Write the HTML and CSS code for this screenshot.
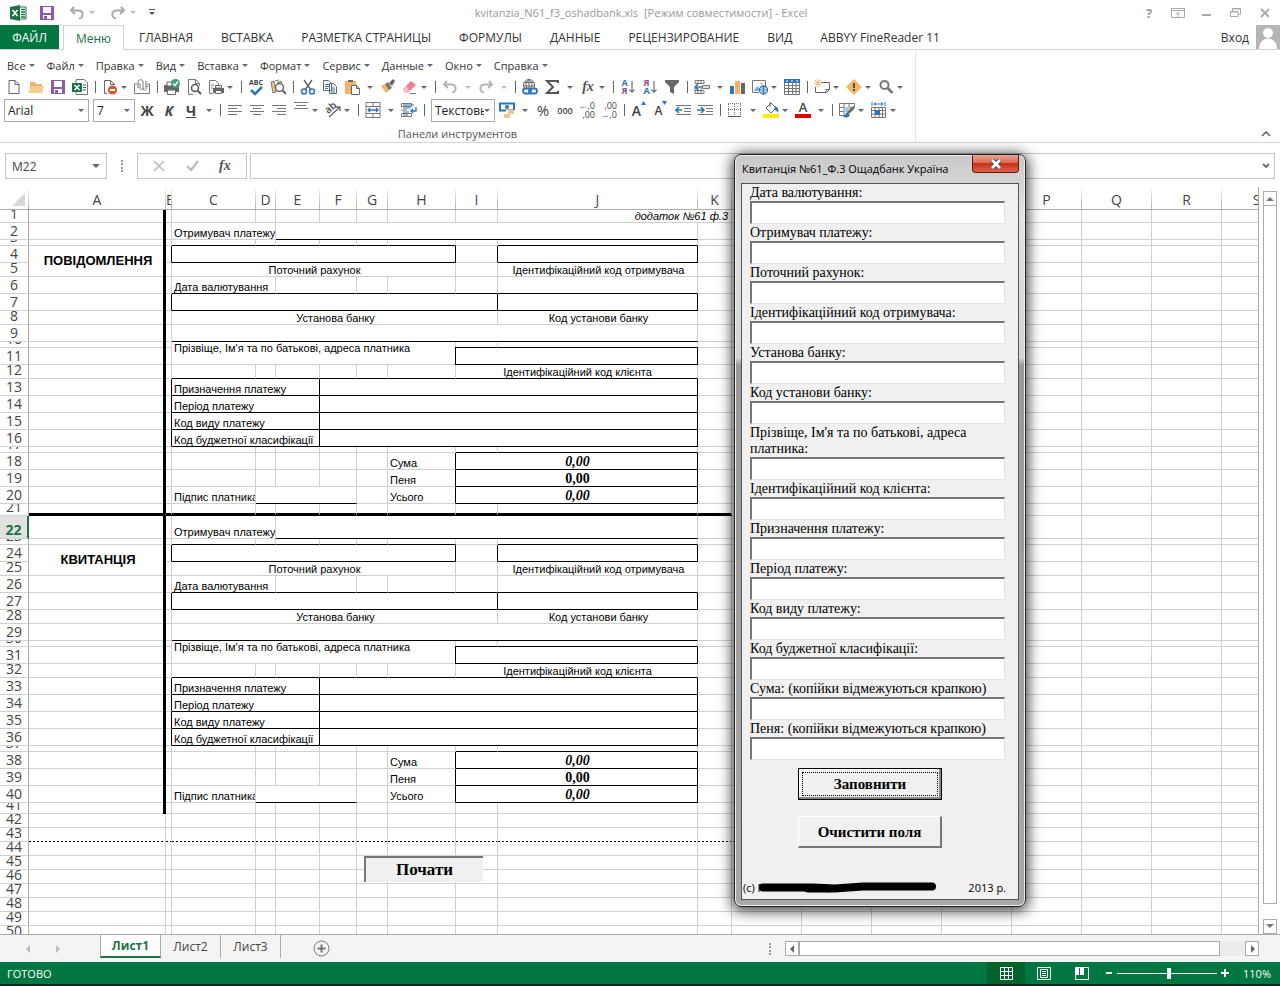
FILE: index.html
```html
<!DOCTYPE html>
<html lang="ru">
<head>
<meta charset="utf-8">
<title>kvitanzia_N61_f3_oshadbank.xls - Excel</title>
<link rel="stylesheet" href="styles.css">
</head>
<body>
<div class="app">
  <header class="titlebar">
    <div class="quick">
      <svg width="17" height="16" viewBox="0 0 17 16"><path d="M9 2h7v12H9" fill="#fff" stroke="#1e7145"/><path d="M11 4.500h4M11 7h4M11 9.500h4M11 12h4" stroke="#1e7145" stroke-width="1.300"/><path d="M0 2l10-2v16L0 14z" fill="#1e7145"/><path d="M2.500 5l5 6M7.500 5l-5 6" stroke="#fff" stroke-width="1.500"/></svg>
      <button class="qb" aria-label="Сохранить"><svg width="14" height="14" viewBox="0 0 14 14"><path d="M0 0h14v14H0z" fill="#8c5aa8"/><path d="M3 1h8v6H3zM3 9h8v4H3z" fill="#fff"/><path d="M4 10h3v4H4z" fill="#8c5aa8"/></svg></button>
      <button class="qb wide" aria-label="Отменить"><svg width="16" height="14" viewBox="0 0 16 14"><path d="M5 1L2 4.500 6 8M2 4.500h7c6 0 6 7 1 8" fill="none" stroke="#aaa" stroke-width="2"/></svg><i class="dd pale"></i></button>
      <button class="qb wide" aria-label="Вернуть"><svg width="16" height="14" viewBox="0 0 16 14"><path d="M11 1l3 3.500L10 8M14 4.500H7c-6 0-6 7-1 8" fill="none" stroke="#aaa" stroke-width="2"/></svg><i class="dd pale"></i></button>
      <button class="qb" aria-label="Настройка панели"><svg width="7" height="8" viewBox="0 0 7 8"><path d="M0 .5h6" stroke="#555"/><path d="M0 3h6L3 6z" fill="#555"/></svg></button>
    </div>
    <h1 class="doc">kvitanzia_N61_f3_oshadbank.xls&nbsp; [Режим совместимости] - Excel</h1>
    <div class="winbtns">
      <button aria-label="Справка" class="help">?</button>
      <button aria-label="Лента"><svg width="14" height="12" viewBox="0 0 14 12"><path d="M.5 1.500h13v9H.5zM.5 3.500h13M7 10V5.500M5 7.500l2-2 2 2" fill="none" stroke="#aaa"/></svg></button>
      <button aria-label="Свернуть"><svg width="14" height="12" viewBox="0 0 14 12"><path d="M2 8h9" stroke="#aaa" stroke-width="2"/></svg></button>
      <button aria-label="Восстановить"><svg width="14" height="12" viewBox="0 0 14 12"><path d="M3.500 4V1.500h8v6H9M1.500 4.500H9v5H1.500zM3 2h9M1 5h8" fill="none" stroke="#aaa"/></svg></button>
      <button aria-label="Закрыть"><svg width="14" height="12" viewBox="0 0 14 12"><path d="M3 2l8 8M11 2l-8 8" stroke="#aaa" stroke-width="1.800"/></svg></button>
    </div>
  </header>

  <nav class="tabs">
    <button class="tab file">ФАЙЛ</button>
    <button class="tab current">Меню</button>
    <button class="tab">ГЛАВНАЯ</button>
    <button class="tab">ВСТАВКА</button>
    <button class="tab">РАЗМЕТКА СТРАНИЦЫ</button>
    <button class="tab">ФОРМУЛЫ</button>
    <button class="tab">ДАННЫЕ</button>
    <button class="tab">РЕЦЕНЗИРОВАНИЕ</button>
    <button class="tab">ВИД</button>
    <button class="tab">ABBYY FineReader 11</button>
    <div class="login"><a href="#">Вход</a><svg width="24" height="24" viewBox="0 0 24 24"><path d="M0 0h24v24H0z" fill="#b5b5b5"/><circle cx="12" cy="8" r="5" fill="#fff"/><path d="M3 24c0-14 18-14 18 0z" fill="#fff"/></svg></div>
  </nav>

  <section class="ribbon">
    <div class="group">
      <div class="menus">
        <button>Все<i class="dd"></i></button><button>Файл<i class="dd"></i></button><button>Правка<i class="dd"></i></button><button>Вид<i class="dd"></i></button><button>Вставка<i class="dd"></i></button><button>Формат<i class="dd"></i></button><button>Сервис<i class="dd"></i></button><button>Данные<i class="dd"></i></button><button>Окно<i class="dd"></i></button><button>Справка<i class="dd"></i></button>
      </div>
      <div class="tools">
        <button class="t" aria-label="Создать"><svg viewBox="0 0 16 16"><path d="M3 1.500h6l4 4v9H3zM9 1.500v4h4" fill="#fff" stroke="#666"/></svg></button>
        <button class="t" aria-label="Открыть"><svg viewBox="0 0 16 16"><path d="M2 14V3h5l1 2h6v9z" fill="#f0b468"/><path d="M0 14l3-7h13l-2 7z" fill="#f8cd93"/></svg></button>
        <button class="t" aria-label="Сохранить"><svg viewBox="0 0 16 16"><path d="M1 1h14v14H1z" fill="#8c5aa8"/><path d="M4 2h8v6H4zM4 10h8v4H4z" fill="#fff"/><path d="M5 11h3v4H5z" fill="#8c5aa8"/></svg></button>
        <button class="t" aria-label="Сохранить в Excel"><svg viewBox="0 0 16 16"><path d="M4 .5h8l3.500 3v12H4z" fill="#fff" stroke="#777"/><path d="M0 4h10v9H0z" fill="#1e7145"/><path d="M2.500 6l5 5M7.500 6l-5 5" stroke="#fff" stroke-width="1.500"/><path d="M11 6h3M11 8.500h3M11 11h3" stroke="#1e7145"/></svg></button>
        <span class="sep"></span>
        <button class="t" aria-label="Удалить"><svg viewBox="0 0 16 16"><path d="M5 14.500H2.500v-13h6l4 4V6M8.500 1.500v4h4" fill="none" stroke="#666"/><circle cx="10.500" cy="11" r="4.500" fill="#d9532c"/><path d="M8 11h5" stroke="#fff" stroke-width="2"/></svg></button><i class="dd gap"></i>
        <button class="t" aria-label="Вложение"><svg viewBox="0 0 16 16"><path d="M3 5H.5v9.500h15V5H13M12 7.500h2M4 9V3c0-3 5-3 5 0v6c0 2-3 2-3 0V4M9 9c0 3 3 3 3 0V2" fill="none" stroke="#777"/></svg></button>
        <span class="sep"></span>
        <button class="t" aria-label="Печать"><svg viewBox="0 0 16 16"><path d="M0 6h15v7H0z" fill="#666"/><path d="M3 3h8v4H3zM3.500 11h8v4.500h-8z" fill="#fff" stroke="#666"/><circle cx="11.500" cy="4.500" r="4.500" fill="#3f9d77"/><path d="M9 4.500l2 2 3-4" stroke="#fff" stroke-width="1.400" fill="none"/></svg></button>
        <button class="t" aria-label="Просмотр"><svg viewBox="0 0 16 16"><path d="M7 15.500H2.500V.5h7l4 4V7M9.500.5v4h4" fill="none" stroke="#777"/><circle cx="9" cy="9" r="3.500" fill="#fff" stroke="#555" stroke-width="1.500"/><path d="M12 12l3 3" stroke="#555" stroke-width="2"/></svg></button>
        <button class="t" aria-label="Параметры печати"><svg viewBox="0 0 16 16"><path d="M5 14.500H1.500v-13h6l3 3V6M3 6h3M3 9h2" fill="none" stroke="#777"/><path d="M5 9h11v5H5z" fill="#666"/><path d="M7.500 6.500h6V9h-6zM7.500 11.500h6v3h-6z" fill="#fff" stroke="#666"/></svg></button><i class="dd gap"></i>
        <span class="sep"></span>
        <button class="t spell" aria-label="Орфография"><span>ABC</span><svg viewBox="0 0 16 10"><path d="M3 4l4 4 7-7" fill="none" stroke="#2e75b6" stroke-width="2.500"/></svg></button>
        <button class="t" aria-label="Справочники"><svg viewBox="0 0 16 16"><path d="M1 3l3-1 2 11-3 1zM5 2l4-1M7 4l4-2 1 2" fill="#f5c78b" stroke="#777"/><circle cx="9.500" cy="8.500" r="4" fill="#fff" stroke="#666" stroke-width="1.500"/><path d="M12 11l4 4" stroke="#666" stroke-width="2"/></svg></button>
        <span class="sep"></span>
        <button class="t" aria-label="Вырезать"><svg viewBox="0 0 16 16"><path d="M4 1l7 10M12 1L5 11" stroke="#666" stroke-width="1.500"/><circle cx="4" cy="12.500" r="2.500" fill="none" stroke="#2e75b6" stroke-width="1.500"/><circle cx="12" cy="12.500" r="2.500" fill="none" stroke="#2e75b6" stroke-width="1.500"/></svg></button>
        <button class="t" aria-label="Копировать"><svg viewBox="0 0 16 16"><path d="M1.500 1.500h5l3 3v7h-8zM7.500 4.500h4l3 3v7h-7z" fill="#fff" stroke="#666"/><path d="M3 5.500h4M3 7.500h4M3 9.500h3M9 9h4M9 11h4M9 13h4" stroke="#2e75b6"/></svg></button>
        <button class="t" aria-label="Вставить"><svg viewBox="0 0 16 16"><path d="M1 2h11v13H1z" fill="#f0b468"/><path d="M4 3V1h5v2z" fill="#666"/><path d="M7.500 6.500h5l3 3v6h-8zM12.500 6.500v3h3" fill="#fff" stroke="#666"/></svg></button><i class="dd gap w"></i>
        <button class="t" aria-label="Формат по образцу"><svg viewBox="0 0 16 16"><path d="M1 7l5 7 4-3-5-6z" fill="#f0b468"/><path d="M5 5l3-2 4 6-3 2z" fill="#777"/><path d="M9 4l4-4 2 2-3 5z" fill="#666"/></svg></button>
        <button class="t" aria-label="Очистить"><svg viewBox="0 0 16 16"><path d="M1 10l8-8 5 4-8 8H3z" fill="#ef7f93"/><path d="M1 10l3-3 4 5-2 2H3z" fill="#f8c0c8"/><path d="M8 14.500h6" stroke="#777"/></svg></button><i class="dd gap"></i>
        <span class="sep"></span>
        <button class="t" aria-label="Отменить"><svg viewBox="0 0 16 16"><path d="M5 2L2 5.500 6 9M2 5.500h7c6 0 6 7 1 8" fill="none" stroke="#b5b5b5" stroke-width="2"/></svg></button><i class="dd gap w pale"></i>
        <button class="t" aria-label="Вернуть"><svg viewBox="0 0 16 16"><path d="M11 2l3 3.500L10 9M14 5.500H7c-6 0-6 7-1 8" fill="none" stroke="#b5b5b5" stroke-width="2"/></svg></button><i class="dd gap w pale"></i>
        <span class="sep"></span>
        <button class="t" aria-label="Гиперссылка"><svg viewBox="0 0 16 16"><circle cx="7" cy="6" r="5.500" fill="none" stroke="#666"/><path d="M7 0v9M2 3.500h10M1.500 7h11M7 .5c-4 3-4 8 0 10M7 .5c4 3 4 8 0 10" fill="none" stroke="#666"/><rect x="1" y="9.500" width="8" height="5" rx="2.500" fill="#fff" stroke="#2e75b6" stroke-width="1.800"/><rect x="7" y="9.500" width="8" height="5" rx="2.500" fill="none" stroke="#2e75b6" stroke-width="1.800"/></svg></button>
        <button class="t" aria-label="Сумма"><svg viewBox="0 0 16 16"><path d="M14 4V2H3l6 6-6 6h11v-2" fill="none" stroke="#555" stroke-width="2"/></svg></button><i class="dd gap w"></i>
        <button class="t fx" aria-label="Функция">fx</button><i class="dd gap"></i>
        <span class="sep"></span>
        <button class="t sort" aria-label="Сортировка по возрастанию"><span><b class="blue">А</b><b class="violet">Я</b></span><svg viewBox="0 0 7 16"><path d="M3.500 1v13M.5 11l3 3 3-3" fill="none" stroke="#666" stroke-width="1.300"/></svg></button>
        <button class="t sort" aria-label="Сортировка по убыванию"><span><b class="violet">Я</b><b class="blue">А</b></span><svg viewBox="0 0 7 16"><path d="M3.500 1v13M.5 11l3 3 3-3" fill="none" stroke="#666" stroke-width="1.300"/></svg></button>
        <button class="t" aria-label="Фильтр"><svg viewBox="0 0 16 16"><path d="M1 1h14v2L10 8v7l-4-2V8L1 3z" fill="#666"/></svg></button>
        <span class="sep"></span>
        <button class="t" aria-label="Вставить ячейки"><svg viewBox="0 0 16 16"><path d="M1 1.500h9v3H1zM4 1v4M7 1v4M1 11.500h9v3H1zM4 9v6M7 9v6M1 9v3" fill="none" stroke="#777"/><path d="M8.500 6.500h7v3h-7z" fill="#ddd" stroke="#777"/><path d="M8 8H1M4 5L1 8l3 3" fill="none" stroke="#2e75b6" stroke-width="1.500"/></svg></button><i class="dd gap w"></i>
        <button class="t" aria-label="Диаграмма"><svg viewBox="0 0 16 16"><path d="M0 7h4v8H0z" fill="#2e75b6"/><path d="M5 2h5v13H5z" fill="#f0b468"/><path d="M11 4h4v11h-4z" fill="#666"/></svg></button>
        <button class="t" aria-label="Рисунок"><svg viewBox="0 0 16 16"><path d="M7 13.500H.5v-12h13V7" fill="none" stroke="#777"/><path d="M2 11l3-4 3 3v2H2z" fill="#7eb2dc"/><circle cx="9.500" cy="4.500" r="1.300" fill="#f0b468"/><circle cx="11.500" cy="11" r="4" fill="#fff" stroke="#2e75b6" stroke-width="1.300"/><path d="M8 11h7M11.500 7v8M9.500 9h4M9.500 13h4" stroke="#2e75b6"/></svg></button><i class="dd gap"></i>
        <button class="t" aria-label="Таблица"><svg viewBox="0 0 16 16"><path d="M.5.5h15v15H.5zM.5 6.500h15M.5 9.500h15M.5 12.500h15M4.500 4v12M8.500 4v12M12 4v12" fill="none" stroke="#777"/><path d="M0 0h16v4H0z" fill="#2e75b6"/><path d="M2 2h2M7 2h2M12 2h2" stroke="#fff"/></svg></button>
        <span class="sep"></span>
        <button class="t" aria-label="Примечание"><svg viewBox="0 0 16 16"><path d="M7 3.500h8.500v7l-3 3h-11V8M15 10.500h-3v3" fill="none" stroke="#666"/><path d="M4 0v8M0 4h8M1 1l6 6M7 1L1 7" stroke="#f0b468"/></svg></button><i class="dd gap"></i>
        <button class="t" aria-label="Ошибки"><svg viewBox="0 0 16 16"><path d="M8 0l8 8-8 8-8-8z" fill="#f3b768"/><path d="M8 4v5M8 10v2" stroke="#444" stroke-width="1.800"/></svg></button><i class="dd gap"></i>
        <button class="t" aria-label="Найти"><svg viewBox="0 0 16 16"><circle cx="6.500" cy="6" r="4" fill="none" stroke="#777" stroke-width="2"/><path d="M9.500 9l5 5" stroke="#777" stroke-width="2.600"/></svg></button><i class="dd gap"></i>
      </div>
      <div class="tools second">
        <label class="combo font"><select aria-label="Шрифт"><option>Arial</option></select><i class="dd"></i></label>
        <label class="combo size"><select aria-label="Размер"><option>7</option></select><i class="dd"></i></label>
        <button class="t fmt" aria-label="Полужирный"><b>Ж</b></button>
        <button class="t fmt" aria-label="Курсив"><b><em>К</em></b></button>
        <button class="t fmt" aria-label="Подчеркнутый"><b><u>Ч</u></b></button><i class="dd gap w"></i>
        <span class="sep"></span>
        <button class="t" aria-label="По левому краю"><svg viewBox="0 0 16 16"><path d="M1 3.500h14M1 6.500h9M1 9.500h14M1 12.500h9" stroke="#777"/></svg></button>
        <button class="t" aria-label="По центру"><svg viewBox="0 0 16 16"><path d="M1 3.500h14M4 6.500h8M1 9.500h14M4 12.500h8" stroke="#777"/></svg></button>
        <button class="t" aria-label="По правому краю"><svg viewBox="0 0 16 16"><path d="M1 3.500h14M6 6.500h9M1 9.500h14M6 12.500h9" stroke="#777"/></svg></button>
        <button class="t" aria-label="По верхнему краю"><svg viewBox="0 0 16 16"><path d="M1 .5h14M3 3.500h10M1 6.500h14" stroke="#777"/></svg></button><i class="dd gap"></i>
        <button class="t orient" aria-label="Ориентация"><span>ab</span><svg viewBox="0 0 16 16"><path d="M4 15L15 5M11 5h4v4" fill="none" stroke="#666" stroke-width="1.300"/></svg></button><i class="dd gap"></i>
        <span class="sep"></span>
        <button class="t" aria-label="Объединить"><svg viewBox="0 0 16 16"><path d="M1 .5h14v15H1zM1 4.500h14M1 11.500h14M8 0v4M8 12v4" fill="none" stroke="#777"/><path d="M3 8h10M5 6L3 8l2 2M11 6l2 2-2 2" fill="none" stroke="#2e75b6" stroke-width="1.300"/></svg></button><i class="dd gap w"></i>
        <button class="t" aria-label="Перенос текста"><svg viewBox="0 0 16 16"><path d="M.5 1.500h10v3H.5zM.5 11.500h10v3H.5zM0 8h6" fill="none" stroke="#777"/><path d="M2 3h11M2 6h8M2 10h6M2 13h5" stroke="#2e75b6"/><path d="M15 5v4h-5M12 7l-2 2 2 2" fill="none" stroke="#2e75b6" stroke-width="1.300"/></svg></button>
        <span class="sep"></span>
        <label class="combo kind"><select aria-label="Числовой формат"><option>Текстовый</option></select><i class="dd"></i></label>
        <button class="t" aria-label="Денежный формат"><svg viewBox="0 0 16 16"><path d="M1 1.500h14v7H1z" fill="#fff" stroke="#2e75b6" stroke-width="2"/><circle cx="8" cy="5" r="2" fill="#2e75b6"/><path d="M7 8h9v8H4V12h3z" fill="#fff"/><path d="M9 9h6M9 11h6M5 13h6M5 15h6" stroke="#f0b468" stroke-width="1.500"/></svg></button><i class="dd gap w"></i>
        <button class="t pct" aria-label="Процентный формат">%</button>
        <button class="t zeros" aria-label="Формат с разделителями">000</button>
        <button class="t digits" aria-label="Увеличить разрядность"><span><i class="arr">←</i>,0</span><span>,00</span></button>
        <button class="t digits" aria-label="Уменьшить разрядность"><span>,00</span><span><i class="arr">→</i>,0</span></button>
        <span class="sep"></span>
        <button class="t letter" aria-label="Увеличить шрифт">A<svg viewBox="0 0 5 4"><path d="M0 4l2.500-4L5 4z" fill="#2e75b6"/></svg></button>
        <button class="t letter small" aria-label="Уменьшить шрифт">A<svg viewBox="0 0 5 4"><path d="M0 0h5L2.500 4z" fill="#2e75b6"/></svg></button>
        <button class="t" aria-label="Уменьшить отступ"><svg viewBox="0 0 16 16"><path d="M1 3.500h15M9 6.500h7M9 9.500h7M1 12.500h15" stroke="#777"/><path d="M7 8H1M4 5L1 8l3 3" fill="none" stroke="#2e75b6" stroke-width="1.600"/></svg></button>
        <button class="t" aria-label="Увеличить отступ"><svg viewBox="0 0 16 16"><path d="M1 3.500h15M9 6.500h7M9 9.500h7M1 12.500h15" stroke="#777"/><path d="M0 8h7M4 5l3 3-3 3" fill="none" stroke="#2e75b6" stroke-width="1.600"/></svg></button>
        <span class="sep"></span>
        <button class="t" aria-label="Границы"><svg viewBox="0 0 16 16"><path d="M1.500 2v12M7.500 2v12M13.500 2v12M1 1.500h13M1 7.500h13" stroke="#777" stroke-dasharray="1 1"/><path d="M1 14.500h13" stroke="#555"/></svg></button><i class="dd gap w"></i>
        <button class="t" aria-label="Цвет заливки"><svg viewBox="0 0 16 16"><path d="M3 6l5-5 5 5-5 5z" fill="#fff" stroke="#666"/><path d="M7 0v5" stroke="#666"/><path d="M12 4c3 1 4 4 3 7-1-2-2-3-4-3z" fill="#2e75b6"/><path d="M0 12h16v4H0z" fill="#ffee00"/></svg></button><i class="dd gap"></i>
        <button class="t color" aria-label="Цвет шрифта">A</button><i class="dd gap w"></i>
        <span class="sep"></span>
        <button class="t" aria-label="Формат таблицы"><svg viewBox="0 0 16 16"><path d="M.5 1.500h15M.5 1.500v12H7M.5 5.500h12M.5 9.500h8M5 1v12M10 1v6M15.500 1v4" fill="none" stroke="#777"/><path d="M5 5h6l-3 5H5z" fill="#a8cbe8"/><path d="M14 4l2 2-6 6-2-2z" fill="#666"/><path d="M8 10l3 3c-2 3-4 3-7 2 2-1 2-3 4-5z" fill="#2e75b6"/></svg></button><i class="dd gap"></i>
        <button class="t" aria-label="Формат ячеек"><svg viewBox="0 0 16 16"><path d="M1 0v4M14 0v4M3 2h9M5 .5L3 2l2 1.500M10 .5L12 2l-2 1.500" fill="none" stroke="#2e75b6"/><path d="M.5 5.500h14v10H.5zM.5 8.500h14M.5 12h14M4 5v11M8 5v11M11.500 5v11" fill="none" stroke="#777"/><path d="M4 8h5v5H4z" fill="#2e75b6"/></svg></button><i class="dd gap"></i>
      </div>
      <div class="caption">Панели инструментов</div>
    </div>
    <button class="collapse" aria-label="Свернуть ленту"><svg width="10" height="6" viewBox="0 0 10 6"><path d="M1 5l4-4 4 4" fill="none" stroke="#666" stroke-width="1.600"/></svg></button>
  </section>

  <section class="formula">
    <div class="namebox"><input aria-label="Имя ячейки" value="M22"><i class="dd big"></i></div>
    <span class="dots"></span>
    <div class="fbtns">
      <button aria-label="Отмена"><svg width="12" height="12" viewBox="0 0 12 12"><path d="M1 1l10 10M11 1L1 11" stroke="#bbb" stroke-width="1.600"/></svg></button>
      <button aria-label="Ввод"><svg width="13" height="12" viewBox="0 0 13 12"><path d="M1 6l4 4 7-9" fill="none" stroke="#bbb" stroke-width="2.200"/></svg></button>
      <button aria-label="Вставить функцию" class="fx">fx</button>
    </div>
    <div class="fbox"><input aria-label="Строка формул"><svg width="8" height="6" viewBox="0 0 8 6"><path d="M1 1l3 3 3-3" fill="none" stroke="#666" stroke-width="1.800"/></svg></div>
  </section>

  <main class="work">
    <div class="sheet">
      <table class="grid" id="grid"></table>
      <button class="start">Почати</button>
    </div>
    <div class="vscroll">
      <button aria-label="Вверх"><svg width="8" height="5" viewBox="0 0 8 5"><path d="M0 5l4-4 4 4z" fill="#777"/></svg></button>
      <div class="vthumb"></div>
      <button aria-label="Вниз"><svg width="8" height="5" viewBox="0 0 8 5"><path d="M0 0h8L4 4z" fill="#777"/></svg></button>
    </div>
  </main>

  <section class="sheets">
    <div class="navs"><button aria-label="Предыдущий лист"><svg width="5" height="8" viewBox="0 0 5 8"><path d="M4 0v8L0 4z" fill="#bbb"/></svg></button><button aria-label="Следующий лист"><svg width="5" height="8" viewBox="0 0 5 8"><path d="M1 0v8l4-4z" fill="#bbb"/></svg></button></div>
    <button class="st on">Лист1</button><button class="st">Лист2</button><button class="st">Лист3</button>
    <button class="add" aria-label="Новый лист"><svg width="17" height="17" viewBox="0 0 17 17"><circle cx="8.500" cy="8.500" r="7.500" fill="none" stroke="#777"/><path d="M8.500 4.500v8M4.500 8.500h8" stroke="#777" stroke-width="2"/></svg></button>
    <span class="dots"></span>
    <div class="hscroll">
      <button aria-label="Влево"><svg width="5" height="8" viewBox="0 0 5 8"><path d="M4 0v8L0 4z" fill="#666"/></svg></button>
      <div class="hthumb"></div>
      <button aria-label="Вправо"><svg width="5" height="8" viewBox="0 0 5 8"><path d="M1 0v8l4-4z" fill="#666"/></svg></button>
    </div>
  </section>

  <footer class="status">
    <span class="ready">ГОТОВО</span>
    <button class="view on" aria-label="Обычный"><svg width="13" height="13" viewBox="0 0 13 13"><path d="M.5.5h12v12H.5zM4.500 0v13M8.500 0v13M0 4.500h13M0 8.500h13" fill="none" stroke="#fff"/></svg></button>
    <button class="view" aria-label="Разметка страницы"><svg width="14" height="13" viewBox="0 0 14 13"><path d="M.5.5h13v12H.5zM3.500 2.500h7v8h-7zM5 4.500h4M5 6.500h4M5 8.500h4" fill="none" stroke="#fff"/></svg></button>
    <button class="view" aria-label="Страничный режим"><svg width="14" height="13" viewBox="0 0 14 13"><path d="M.5.5h13v12H.5z" fill="none" stroke="#fff"/><path d="M1 1h3v7H1zM5 1h4v7H5z" fill="#fff"/></svg></button>
    <button class="zb" aria-label="Уменьшить"><svg width="8" height="8" viewBox="0 0 8 8"><path d="M1 4h6" stroke="#fff" stroke-width="2"/></svg></button>
    <input class="zoom" type="range" min="0" max="100" value="52" aria-label="Масштаб">
    <button class="zb" aria-label="Увеличить"><svg width="8" height="8" viewBox="0 0 8 8"><path d="M0 4h8M4 0v8" stroke="#fff" stroke-width="2"/></svg></button>
    <span class="pc">110%</span>
  </footer>

  <div class="dialog" role="dialog" aria-labelledby="dlg">
    <div class="dtitle"><span id="dlg">Квитанція №61_Ф.3 Ощадбанк Україна</span><button class="x" aria-label="Закрити"><svg width="12" height="10" viewBox="0 0 12 10"><path d="M2 1l8 8M10 1l-8 8" stroke="#444a60" stroke-width="4.500"/><path d="M2 1l8 8M10 1l-8 8" stroke="#fff" stroke-width="2.800"/></svg></button></div>
    <form class="dform">
      <label>Дата валютування:<input></label>
      <label>Отримувач платежу:<input></label>
      <label>Поточний рахунок:<input></label>
      <label>Ідентифікаційний код отримувача:<input></label>
      <label>Установа банку:<input></label>
      <label>Код установи банку:<input></label>
      <label>Прізвіще, Ім'я та по батькові, адреса платника:<input></label>
      <label>Ідентифікаційний код клієнта:<input></label>
      <label>Призначення платежу:<input></label>
      <label>Період платежу:<input></label>
      <label>Код виду платежу:<input></label>
      <label>Код буджетної класифікації:<input></label>
      <label>Сума: (копійки відмежуються крапкою)<input></label>
      <label>Пеня: (копійки відмежуються крапкою)<input></label>
      <button type="button" class="db main"><span>Заповнити</span></button>
      <button type="button" class="db">Очистити поля</button>
      <div class="copy"><span>(c) Г</span><svg width="180" height="14" viewBox="0 0 180 14"><path d="M5 7.500h50l22 1 28-2h69" fill="none" stroke="#000" stroke-width="8" stroke-linecap="round"/><path d="M50 9h22" stroke="#000" stroke-width="7" stroke-linecap="round"/></svg><span>2013 р.</span></div>
    </form>
  </div>
</div>
<script src="sheet.js"></script>
</body>
</html>
```
FILE: styles.css
```css
* { box-sizing: border-box; }
body { margin: 0; font: 12px "Open Sans", "Noto Sans", sans-serif; color: #444; background: #fff; }
button { font: inherit; color: inherit; background: none; border: 0; padding: 0; margin: 0; }
input, select { font: inherit; color: inherit; border: 0; outline: 0; background: none; padding: 0; margin: 0; border-radius: 0; }
svg { display: block; }
.app { position: relative; min-height: 100vh; height: 100vh; display: flex; flex-direction: column; overflow: hidden; }

.dd { width: 0; height: 0; flex: none; border: 3px solid transparent; border-top: 3px solid #666; border-bottom: 0; }
.dd.pale { border-top-color: #bbb; }
.dd.big { border-width: 4px 4px 0; }
.dd.gap { margin-right: 4px; }
.dd.gap.w { margin: 0 4px; }

.titlebar { height: 25px; flex: none; display: flex; align-items: center; justify-content: space-between; }
.quick { display: flex; align-items: center; gap: 13px; padding-left: 10px; flex: 1; }
.qb { display: flex; align-items: center; gap: 4px; }
.qb.wide { margin-left: 2px; }
.doc { margin: 0; font-size: 11px; font-weight: 400; color: #999; white-space: nowrap; }
.winbtns { flex: 1; display: flex; justify-content: flex-end; gap: 15px; padding-right: 8px; color: #999; }
.winbtns .help { width: 14px; font-weight: 700; font-size: 13px; line-height: 16px; }
.winbtns button { display: flex; align-items: center; justify-content: center; }

.tabs { height: 25px; flex: none; display: flex; border-bottom: 1px solid #d4d4d4; color: #333; }
.tab { padding: 0 14px; white-space: nowrap; }
.tab.file { width: 59px; padding: 0; background: #007640; color: #fff; margin-right: 4px; }
.tab.current { width: 61px; padding: 0; color: #217346; border: 1px solid #d4d4d4; border-bottom: 0; background: #fff; height: 25px; margin-right: 1px; }
.login { margin-left: auto; display: flex; align-items: center; gap: 7px; }
.login a { color: #333; text-decoration: none; }

.ribbon { height: 93px; flex: none; display: flex; justify-content: space-between; align-items: flex-end; border-bottom: 1px solid #d4d4d4; }
.group { width: 916px; height: 88px; border-right: 1px solid #e1e1e1; margin-bottom: 4px; align-self: flex-start; margin-top: 3px; padding-top: 2px; }
.menus { display: flex; gap: 12px; padding-left: 7px; height: 20px; font-size: 11px; color: #333; }
.menus button { display: flex; align-items: center; gap: 3px; }
.tools { display: flex; align-items: center; height: 24px; padding-left: 3px; }
.tools.second { height: 22px; }
.t { width: 22px; height: 22px; flex: none; display: flex; align-items: center; justify-content: center; position: relative; }
.t > svg { width: 16px; height: 16px; }
.sep { width: 8px; height: 12px; flex: none; display: flex; justify-content: center; }
.sep::before { content: ""; width: 1px; background: #666; }
.spell { flex-direction: column; font-size: 7px; font-weight: 700; line-height: 7px; }
.spell > svg { height: 10px; }
.fx { font: italic 700 14px "Liberation Serif", serif; color: #555; }
.sort { gap: 1px; }
.sort span { display: flex; flex-direction: column; font-size: 9px; line-height: 8px; }
.sort > svg { width: 6px; }
.blue { color: #2e75b6; }
.violet { color: #8c4aa0; }
.combo { display: flex; align-items: center; border: 1px solid #ababab; height: 23px; padding: 0 4px 0 3px; margin-right: 4px; color: #222; }
.combo select { appearance: none; flex: 1; width: 0; min-width: 0; overflow: hidden; font-size: 12px; text-overflow: clip; }
.combo.font { width: 85px; margin-left: 1px; }
.combo.size { width: 42px; margin-right: 1px; }
.combo.kind { width: 64px; margin: 0 1px 0 3px; }
.fmt { font-size: 14px; }
.orient span { position: absolute; left: 2px; top: 2px; font-size: 10px; line-height: 12px; font-weight: 600; transform: rotate(-40deg); }
.pct { font-size: 15px; }
.zeros { font-size: 9px; font-weight: 600; }
.digits { flex-direction: column; align-items: flex-end; font-size: 9px; line-height: 9px; padding-right: 3px; }
.arr { font-style: normal; color: #2e75b6; }
.letter { font-size: 14px; font-weight: 600; align-items: center; }
.letter.small { font-size: 12px; }
.t.letter > svg { width: 5px; height: 4px; align-self: flex-start; margin-top: 2px; }
.color::after { content: ""; position: absolute; left: 3px; right: 3px; bottom: 3px; height: 4px; background: #e00000; }
.color { font-size: 13px; line-height: 13px; font-weight: 600; padding-bottom: 5px; }
.caption { text-align: center; line-height: 25px; font-size: 11px; color: #555; }
.collapse { padding: 0 9px 5px 0; }

.formula { flex: none; height: 44px; padding: 10px 5px 8px; display: flex; align-items: stretch; }
.namebox, .fbtns, .fbox { border: 1px solid #c6c6c6; display: flex; align-items: center; }
.namebox { width: 102px; padding: 0 6px; }
.namebox input { flex: 1; width: 0; }
.dots { width: 30px; display: flex; align-items: center; justify-content: center; }
.dots::before { content: ""; height: 12px; border-left: 2px dotted #999; }
.fbtns { width: 110px; justify-content: space-around; margin-right: 3px; padding: 0 5px; }
.fbox { flex: 1; padding: 0 4px; }
.fbox input { flex: 1; }

.work { flex: 1; min-height: 0; display: flex; border-bottom: 1px solid #ababab; }
.sheet { position: relative; flex: 1; min-width: 0; overflow: hidden; border-right: 1px solid #ababab; }
.grid { table-layout: fixed; border-collapse: separate; border-spacing: 0; width: 1292px; }
.grid td { position: relative; padding: 0 0 0 2px; border: 0 solid #d0d0d0; border-width: 0 1px 1px 0; vertical-align: bottom; font: 11px/12px "Liberation Sans", sans-serif; color: #000; overflow: hidden; white-space: nowrap; }
.grid td.bb { border-bottom-color: #000; }
.grid td.br { border-right-color: #000; }
.grid td.heavy { border-bottom: 3px solid #000; }
.grid td.wall { overflow: visible; }
.grid td.wall::after { content: ""; position: absolute; top: 0; right: -1px; bottom: -1px; width: 3px; background: #000; }
.grid td.dash { border-bottom: 0; background: repeating-linear-gradient(90deg, #000 0 2px, #fff 2px 4px) bottom / 100% 1px no-repeat; }
.grid td.ctr { text-align: center; }
.grid td.top { vertical-align: top; overflow: visible; }
.grid td.top::after { content: ""; position: absolute; right: -1px; bottom: -1px; width: 1px; height: 18px; background: #000; }
.grid td.note { text-align: right; font-style: italic; padding-right: 3px; }
.grid td.head { text-align: center; vertical-align: middle; font-size: 13px; font-weight: 700; line-height: 14px; }
.grid td.sum { text-align: center; vertical-align: middle; font: 700 14px/15px "Liberation Serif", serif; }
.grid td.it { font-style: italic; }
.grid th { padding: 0; font-weight: 400; font-size: 14px; color: #444; border: 0 solid #d0d0d0; }
.grid thead th { height: 23px; border-width: 0 1px 1px 0; border-bottom-color: #ababab; border-image: linear-gradient(#fff, #ababab) 1; line-height: 18px; overflow: hidden; vertical-align: bottom; }
.grid tbody th { border-width: 0 1px 1px 0; border-right-color: #ababab; vertical-align: bottom; }
.grid tbody th div { display: flex; align-items: flex-end; justify-content: center; overflow: hidden; line-height: 17px; }
.grid tbody th.sel { background: #e1e1e1; color: #217346; font-weight: 700; border-right: 2px solid #217346; }
.corner { margin: 0 3px 3px auto; width: 0; border-left: 13px solid transparent; border-bottom: 13px solid #d8d8d8; }
.start { position: absolute; left: 364px; top: 669px; width: 119px; height: 26px; background: #f0f0f0; border: solid #777; border-width: 2px 0 0 2px; font: 700 17px "Liberation Serif", serif; color: #000; }

.vscroll { width: 21px; padding: 4px 3px 0 4px; display: flex; flex-direction: column; background: #fff; }
.vscroll button, .hscroll button { width: 14px; height: 15px; flex: none; border: 1px solid #ababab; background: #fff; display: flex; align-items: center; justify-content: center; }
.vthumb { flex: 1; margin-bottom: 15px; border: 1px solid #ababab; border-top: 0; background: #fff; width: 14px; }

.sheets { flex: none; height: 27px; display: flex; align-items: stretch; background: #f4f4f4; }
.navs { width: 100px; display: flex; gap: 24px; padding-left: 26px; }
.st { width: 60px; margin-bottom: 4px; border-right: 1px solid #ababab; }
.st.on { width: 61px; background: #fff; color: #1e7145; font-weight: 700; border: 0 solid #ababab; border-width: 0 1px; border-bottom: 2px solid #217346; }
.add { margin: 0 auto 0 32px; }
.hscroll { width: 474px; margin: 6px 21px 6px 0; display: flex; background: #ececec; }
.hthumb { flex: 1; border: 1px solid #ababab; background: #fff; margin-right: 25px; }

.status { flex: none; height: 24px; background: #007640; border-bottom: 2px solid #16281e; color: #fff; display: flex; align-items: center; font-size: 11px; padding: 0 9px 0 7px; }
.ready { margin-right: auto; }
.view { width: 38px; height: 22px; display: flex; align-items: center; justify-content: center; }
.view.on { background: #00632b; }
.zb { margin: 0 4px; }
.zoom { appearance: none; width: 100px; height: 12px; background: linear-gradient(#fff, #fff) center / 100% 1px no-repeat; }
.zoom::-webkit-slider-thumb { appearance: none; width: 4px; height: 11px; background: #fff; }
.pc { margin-left: 10px; }

.dialog { position: absolute; left: 734px; top: 154px; width: 292px; border: 1px solid #222; border-radius: 7px; padding: 0 6px 6px; background: linear-gradient(#c9c9c9, #e2e2e2 8%, #d4d4d4 27%, #999 28%, #a8a8a8); box-shadow: 0 2px 14px 2px rgba(0, 0, 0, .75), inset 0 0 0 1px #eee; color: #000; }
.dtitle { height: 28px; display: flex; justify-content: space-between; align-items: flex-start; line-height: 28px; font-size: 11px; padding-left: 1px; }
.x { width: 47px; height: 18px; border: 1px solid #5c1d14; border-top: 0; border-radius: 0 0 4px 4px; background: linear-gradient(#e9a594, #dc6d55 45%, #c8301a 50%, #df6248); display: flex; align-items: center; justify-content: center; }
.dform { border: 1px solid #555; background: #f0f0f0; padding: 1px 13px 0 8px; display: flex; flex-direction: column; font: 14px/16px "Liberation Serif", serif; }
.dform label { display: flex; flex-direction: column; margin-bottom: 1px; }
.dform input { height: 23px; background: #fff; border: 1px solid #e3e3e3; border-top: 2px solid #777; border-left: 2px solid #777; }
.db { width: 144px; height: 32px; margin: 16px 0 0 48px; background: #f0f0f0; border: 1px solid #fff; border-right: 2px solid #777; border-bottom: 2px solid #777; font-weight: 700; font-size: 15px; color: #000; }
.db.main { margin-top: 7px; border: 1px solid #000; box-shadow: inset -2px -2px 0 #888, inset 1px 1px 0 #fff; padding: 3px; }
.db.main span { display: block; border: 1px dotted #000; line-height: 22px; }
.copy { display: flex; align-items: center; justify-content: space-between; margin: 30px -1px 3px -7px; height: 18px; font: 11px "Open Sans", sans-serif; }
.copy svg { margin: 0 auto 0 -5px; }
```
FILE: sheet.js
```js
const cols = [['A', 137], ['B', 6], ['C', 84], ['D', 20], ['E', 44], ['F', 37], ['G', 31], ['H', 68], ['I', 42], ['J', 200], ['K', 34],
  ['L', 70], ['M', 70], ['N', 70], ['O', 70], ['P', 70], ['Q', 70], ['R', 70], ['S', 70]];
const half = [17, 6, 17, 14, 17, 17, 14, 17, 6, 17, 14, 17, 17, 17, 17, 6, 17, 17, 17];
const heights = [13, ...half, 12, 23, ...half.slice(1), 11, ...Array(9).fill(14)];
const names = cols.map(c => c[0]);
const merged = {};
const marks = {};

const mark = (cls, row, from, to = from) => {
  for (let i = names.indexOf(from); i <= names.indexOf(to); i++) {
    const key = names[i] + row;
    marks[key] = (marks[key] || '') + ' ' + cls;
  }
};
const put = (row, from, to, text = '', cls = '', rows = 1) => {
  merged[from + row] = { text, cls, rows, span: names.indexOf(to) - names.indexOf(from) + 1 };
};

put(1, 'J', 'K', 'додаток №61 ф.3', 'note');
[0, 20].forEach(o => {
  put(o + 2, 'C', 'D', 'Отримувач платежу');
  put(o + 2, 'E', 'J', '', 'bb');
  mark('bb', o + 3, 'C', 'H'); mark('bb', o + 3, 'J');
  put(o + 4, 'A', 'A', o ? 'КВИТАНЦІЯ' : 'ПОВІДОМЛЕННЯ', 'head', 2);
  put(o + 4, 'C', 'H', '', 'bb br'); mark('br', o + 4, 'B'); mark('br', o + 4, 'I'); mark('bb br', o + 4, 'J');
  put(o + 5, 'C', 'H', 'Поточний рахунок', 'ctr');
  put(o + 5, 'J', 'J', 'Ідентифікаційний код отримувача', 'ctr');
  put(o + 6, 'C', 'D', 'Дата валютування', 'bb');
  put(o + 6, 'E', 'F', '', 'bb'); mark('bb', o + 6, 'G', 'J');
  put(o + 7, 'C', 'I', '', 'bb br'); mark('br', o + 7, 'B'); mark('bb br', o + 7, 'J');
  put(o + 8, 'C', 'I', 'Установа банку', 'ctr');
  put(o + 8, 'J', 'J', 'Код установи банку', 'ctr');
  put(o + 9, 'C', 'J', '', 'bb');
  put(o + 10, 'C', 'H', "Прізвіще, Ім'я та по батькові, адреса платника", 'top', 2);
  mark('bb', o + 10, 'I', 'J');
  put(o + 11, 'I', 'J', '', 'bb br');
  mark('bb', o + 12, 'C', 'H');
  put(o + 12, 'I', 'J', 'Ідентифікаційний код клієнта', 'ctr bb');
  ['Призначення платежу', 'Період платежу', 'Код виду платежу', 'Код буджетної класифікації'].forEach((t, i) => {
    mark('br', o + 13 + i, 'B');
    put(o + 13 + i, 'C', 'E', t, 'bb br');
    put(o + 13 + i, 'F', 'J', '', 'bb br');
  });
  mark('bb', o + 17, 'I', 'J');
  [['Сума', 'it'], ['Пеня', ''], ['Усього', 'it']].forEach(([t, it], i) => {
    put(o + 18 + i, 'H', 'H', t, 'br');
    put(o + 18 + i, 'I', 'J', '0,00', 'sum bb br ' + it);
  });
  put(o + 20, 'C', 'C', 'Підпис платника');
  put(o + 20, 'D', 'F', '', 'bb');
});
for (let r = 1; r <= 41; r++) mark('wall', r, 'A');
mark('heavy', 21, 'A', 'K');
mark('dash', 43, 'A', 'K');

let html = '<colgroup><col style="width:29px">' + cols.map(c => `<col style="width:${c[1]}px">`).join('') + '</colgroup>';
html += '<thead><tr><th><div class="corner"></div></th>' + names.map(n => `<th scope="col">${n}</th>`).join('') + '</tr></thead><tbody>';
const covered = new Set();
heights.forEach((h, i) => {
  const r = i + 1;
  html += `<tr style="height:${h}px"><th scope="row"${r === 22 ? ' class="sel"' : ''}><div style="height:${h - 1}px">${r}</div></th>`;
  names.forEach((n, c) => {
    if (covered.has(n + r)) return;
    const m = merged[n + r] || { text: '', cls: '', rows: 1, span: 1 };
    for (let y = 0; y < m.rows; y++) for (let x = 0; x < m.span; x++) covered.add(names[c + x] + (r + y));
    html += `<td class="${m.cls}${marks[n + r] || ''}" colspan="${m.span}" rowspan="${m.rows}">${m.text}</td>`;
  });
  html += '</tr>';
});
document.getElementById('grid').innerHTML = html + '</tbody>';
```
